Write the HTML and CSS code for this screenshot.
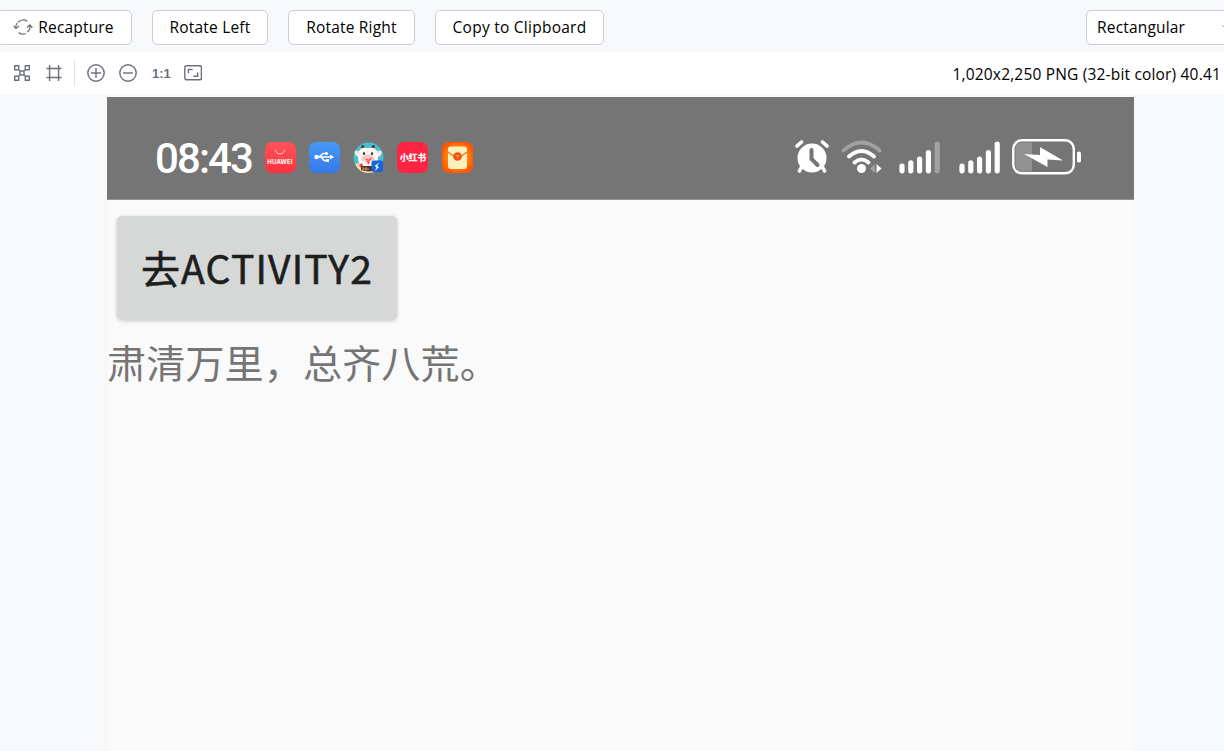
FILE: index.html
```
<!DOCTYPE html>
<html lang="en">
<head>
    <meta charset="UTF-8">
    <title>Device Screenshot</title>
    <link rel="stylesheet" href="styles.css">
</head>
<body>
    <div class="actions">
        <button class="btn btn-recapture">
            <svg class="recapture-icon" width="20" height="18" viewBox="0 0 20 18">
                <path d="M5 4.2A7.1 7.1 0 0 1 14.2 3.3M16.900 7.4A7.1 7.1 0 0 1 14.5 14M12.9 15.5A7.1 7.1 0 0 1 5.6 14.4M2.9 10.2A7.1 7.1 0 0 1 4.1 5M.6 7.9l2.3 2.4 3-2.3M14 9.6l2.9-2.6 2.5 2.8"/>
            </svg>
            <span>Recapture</span>
        </button>
        <button class="btn btn-left">Rotate Left</button>
        <button class="btn btn-right">Rotate Right</button>
        <button class="btn btn-copy">Copy to Clipboard</button>
        <div class="frame-select">
            <span>Rectangular</span>
            <svg width="10" height="6" viewBox="0 0 10 6"><path d="M0 1l4 4 4-4"/></svg>
        </div>
    </div>

    <div class="toolbar">
        <svg class="tool" width="16" height="16" viewBox="0 0 16 16">
            <path d="M.7.7h4v4h-4zM11.3.7h4v4h-4zM.7 11.3h4v4h-4zM11.3 11.3h4v4h-4zM6 6h4v4H6zM4.7 4.7L6 6M11.3 4.7L10 6M4.7 11.3L6 10M11.3 11.3L10 10"/>
        </svg>
        <svg class="tool" width="16" height="16" viewBox="0 0 16 16">
            <path d="M3.6 0v16M12.6 0v16M.5 3.5h15M.5 12.5h15"/>
        </svg>
        <span class="divider"></span>
        <svg class="tool zoom-in" width="18" height="18" viewBox="0 0 18 18">
            <circle cx="9" cy="9" r="8.2"/><path d="M9 4v10M4 9h10"/>
        </svg>
        <svg class="tool zoom-out" width="18" height="18" viewBox="0 0 18 18">
            <circle cx="9" cy="9" r="8.2"/><path d="M4 9h10"/>
        </svg>
        <span class="actual-size">1:1</span>
        <svg class="tool" width="18" height="16" viewBox="0 0 18 16">
            <rect x=".8" y=".8" width="16.6" height="14" rx="1.5"/><path d="M4.4 8.2V4.5h4.2M13.7 7.4v3.9H9.4"/>
        </svg>
        <span class="info">1,020x2,250 PNG (32-bit color) 40.41</span>
    </div>

    <div class="canvas">
        <div class="device">
            <div class="status-bar">
                <span class="clock">08:43</span>
                <div class="apps">
                    <div class="app huawei">
                        <svg width="12" height="7" viewBox="0 0 12 7"><path d="M1.5.5c.5 6 8.5 6 9 0"/></svg>
                        <span>HUAWEI</span>
                    </div>
                    <div class="app usb">
                        <svg width="20" height="12" viewBox="0 0 20 12">
                            <path class="wire" d="M3 6h14M5 6l4-3.5h3M7 6l3 3.5h3"/>
                            <path d="M16 3.5L20 6l-4 2.5z"/><circle cx="2.5" cy="6" r="2.2"/><circle cx="12.5" cy="2.5" r="1.5"/><path d="M12 8h3v3h-3z"/>
                        </svg>
                    </div>
                    <svg class="cow" width="31" height="31" viewBox="0 0 31 31">
                        <circle cx="15.5" cy="15.5" r="15" fill="#43c1cd"/>
                        <path d="M2 22q13-5 27 0-3 9-13.5 9Q6 31 2 22z" fill="#f3d5b0"/>
                        <path d="M9 7Q7 3 10 3l4 4M21 7q2-4-1-4l-4 4" fill="#4b3535"/>
                        <path d="M7 10Q2 7 1.5 10q1 6 6.500 5M23 10q5-3 6 0-1 6-7 5" fill="#f6e9e7"/>
                        <path d="M6 9q3-5 9-3 6-2 9 3l1 9q-2 7-10 7-8 0-10-7z" fill="#fff7f3"/>
                        <ellipse cx="15" cy="16.5" rx="6.5" ry="4" fill="#f9c9c0"/>
                        <ellipse cx="11" cy="11.500" rx="1.1" ry="1.6" fill="#473135"/>
                        <ellipse cx="19" cy="11.500" rx="1.1" ry="1.6" fill="#473135"/>
                        <path d="M13 17q3 3 5-1" fill="none" stroke="#df4b50" stroke-width="1.300"/>
                        <path d="M6 23l3-2 1 3-2 2zM14 19l3 1-2 3z" fill="#ec4b3b"/>
                        <path d="M8 24h11v5q-6 1-11-1z" fill="#503323"/>
                        <path d="M10 25v4M13 25v4M10 27h6" stroke="#cb9a65"/>
                        <rect x="18.500" y="18.500" width="11.500" height="11.500" rx="2.5" fill="#1765dc"/>
                        <path d="M26.500 20.500l-5 3.500 2 1-1.500 4 4-4-2-1z" fill="#fff"/>
                    </svg>
                    <div class="app red-book">小红书</div>
                    <div class="app mail">
                        <svg width="31" height="31" viewBox="0 0 31 31">
                            <rect x="6" y="4.5" width="19" height="22.5" rx="3" fill="#ffefbf"/>
                            <path d="M6 10l7 5h5l7-5" fill="none" stroke="#f6752c" stroke-width="1.3"/>
                            <circle cx="15.5" cy="14.5" r="4.3" fill="#f3540b"/>
                            <path d="M13.5 13.5h4M15.5 13.5v3" stroke="#ffa14d"/>
                        </svg>
                    </div>
                </div>
                <div class="indicators">
                    <svg class="alarm" width="34" height="34" viewBox="0 0 34 34">
                        <circle cx="17" cy="18" r="14.5" fill="#fff"/>
                        <path d="M2 6l4.5-4M27.5 2L32 6M6 28l-1.500 3M28 28l1.500 3" stroke="#fff" stroke-width="3.6" stroke-linecap="round"/>
                        <path d="M16.5 10v9l6 6" fill="none" stroke="#757575" stroke-width="4" stroke-linecap="round"/>
                    </svg>
                    <svg class="wifi" width="41" height="34" viewBox="0 0 41 34">
                        <g fill="none" stroke-width="4" stroke-linecap="round">
                            <path d="M2.500 10.5Q20.5-5.5 38.500 10.5" stroke="#a1a1a1"/>
                            <path d="M8 16.5q12.500-11 25 0M13.500 22.5q7-6 14 0" stroke="#fff"/>
                        </g>
                        <circle cx="20.5" cy="28.5" r="4.5" fill="#fff"/>
                        <path d="M34 24v9l-5-4.5z" fill="#a1a1a1"/><path d="M35.5 24v9l5-4.5z" fill="#fff"/>
                    </svg>
                    <svg class="signal" width="42" height="33" viewBox="0 0 42 33">
                        <g stroke="#fff" stroke-width="5.2" stroke-linecap="round">
                            <path d="M3 25v4.8M11.8 21.8v8M20.6 18v11.8M29.4 11.5v18.3"/>
                            <path d="M38.2 3v26.8" stroke="#a1a1a1"/>
                        </g>
                    </svg>
                    <svg class="signal second" width="42" height="33" viewBox="0 0 42 33">
                        <path d="M3 25v4.8M11.8 21.8v8M20.6 18v11.8M29.4 11.5v18.3M38.2 3v26.8" stroke="#fff" stroke-width="5.2" stroke-linecap="round"/>
                    </svg>
                    <svg class="battery" width="70" height="36" viewBox="0 0 70 36">
                        <path d="M20 3.5H10Q3.5 3.5 3.5 10v16q0 6.5 6.5 6.5h10z" fill="#919191"/>
                        <rect x="1.3" y="1.3" width="60.5" height="33" rx="8.5" fill="none" stroke="#fff" stroke-width="2.4"/>
                        <path d="M12 15l16 1V8l23 13.5-15.5-1V28z" fill="#fff"/>
                        <rect x="65" y="12.5" width="4" height="11" rx="1.8" fill="#fff"/>
                    </svg>
                </div>
            </div>
            <button class="activity-btn">去ACTIVITY2</button>
            <p class="message">肃清万里，总齐八荒。</p>
        </div>
    </div>
</body>
</html>
```
FILE: styles.css
```
* {
    box-sizing: border-box;
}

body {
    margin: 0;
    height: 100vh;
    overflow: hidden;
    display: flex;
    flex-direction: column;
    background: #f7f8fa;
    color: #000;
    font-family: "Segoe UI", "Open Sans", sans-serif;
    font-size: 15.5px;
    letter-spacing: 0.18px;
}

.actions {
    height: 52px;
    flex-shrink: 0;
    display: flex;
    align-items: center;
    gap: 20px;
    padding-top: 2px;
}

.btn,
.frame-select {
    height: 35px;
    flex-shrink: 0;
    display: flex;
    align-items: center;
    justify-content: center;
    padding: 0;
    background: #fff;
    border: 1px solid #c9ccd6;
    border-radius: 5px;
    color: #000;
    font: inherit;
    letter-spacing: inherit;
    white-space: nowrap;
}

.btn-recapture {
    width: 135px;
    margin-left: -3px;
    padding-right: 2px;
    gap: 5px;
}

.recapture-icon {
    fill: none;
    stroke: #6c707e;
    stroke-width: 1.3;
}

.btn-left {
    width: 116px;
}

.btn-right {
    width: 127px;
}

.btn-copy {
    width: 169px;
    letter-spacing: 0.25px;
}

.frame-select {
    width: 150px;
    margin-left: auto;
    margin-right: -12px;
    padding: 0 3px 0 10px;
    justify-content: space-between;
}

.frame-select svg {
    fill: none;
    stroke: #a8adbd;
}

.toolbar {
    height: 42px;
    flex-shrink: 0;
    display: flex;
    align-items: center;
    padding: 0 3px 0 14px;
    background: #fff;
}

.tool {
    fill: none;
    stroke: #6c707e;
    stroke-width: 1.4;
    margin-right: 16px;
}

.divider {
    width: 1px;
    height: 25px;
    margin: 0 12px 0 -4px;
    background: #dfe1e5;
}

.zoom-in {
    margin-right: 14px;
}

.zoom-out {
    margin-right: 15px;
}

.actual-size {
    width: 18px;
    margin-right: 14px;
    color: #6c707e;
    font: bold 13px "Liberation Sans", sans-serif;
    letter-spacing: 0;
}

.info {
    margin-left: auto;
    padding-top: 1px;
    white-space: nowrap;
}

.canvas {
    flex: 1;
    padding: 3px 90px 0 107px;
}

.device {
    height: 100%;
    background: #fafafa;
}

.status-bar {
    height: 103px;
    display: flex;
    align-items: center;
    padding: 18px 52px 0 48px;
    background: #757575;
    border-bottom: 1px solid #929292;
}

.clock {
    width: 98px;
    padding-top: 3px;
    color: #fff;
    font: 500 42px Roboto, sans-serif;
    letter-spacing: -1.9px;
}

.apps {
    display: flex;
    gap: 13.3px;
    margin-left: 11.5px;
}

.app {
    width: 31px;
    height: 31px;
    display: flex;
    align-items: center;
    justify-content: center;
    border-radius: 7px;
    color: #fff;
    overflow: hidden;
}

.huawei {
    flex-direction: column;
    background: linear-gradient(#ff5359, #fc323d);
    font: bold 6px Inter, sans-serif;
}

.huawei svg {
    fill: none;
    stroke: #ffd5d5;
}

.huawei span {
    margin-top: 2px;
}

.usb {
    background: linear-gradient(#4799f6, #3478e9);
}

.usb svg {
    fill: #fff;
}

.usb .wire {
    fill: none;
    stroke: #fff;
    stroke-width: 1.5;
}

.red-book {
    background: #ff2442;
    font: 900 9px "Noto Sans CJK SC", sans-serif;
    letter-spacing: -0.3px;
}

.mail {
    background: radial-gradient(#ff870e 45%, #ff5600 75%);
}

.indicators {
    display: flex;
    align-items: center;
    margin-left: auto;
}

.alarm {
    margin-right: 12px;
}

.wifi {
    margin-right: 17px;
}

.signal {
    margin-right: 18px;
}

.second {
    margin-right: 11px;
}

.activity-btn {
    display: block;
    width: 280px;
    height: 104px;
    margin: 16px 0 0 10px;
    padding: 0 0 3px;
    border: 0;
    border-radius: 5px;
    background: #d6d8d7;
    box-shadow: 0 1px 4px rgba(0, 0, 0, 0.2);
    color: #1d1e1e;
    font: 400 39px "Noto Sans CJK SC", sans-serif;
    -webkit-text-stroke: 0.6px #1d1e1e;
    letter-spacing: 1.2px;
    white-space: nowrap;
}

.message {
    margin: 12px 0 0;
    color: #757575;
    font: 39.2px/58px "Noto Sans CJK SC", sans-serif;
    letter-spacing: 0;
}
```
